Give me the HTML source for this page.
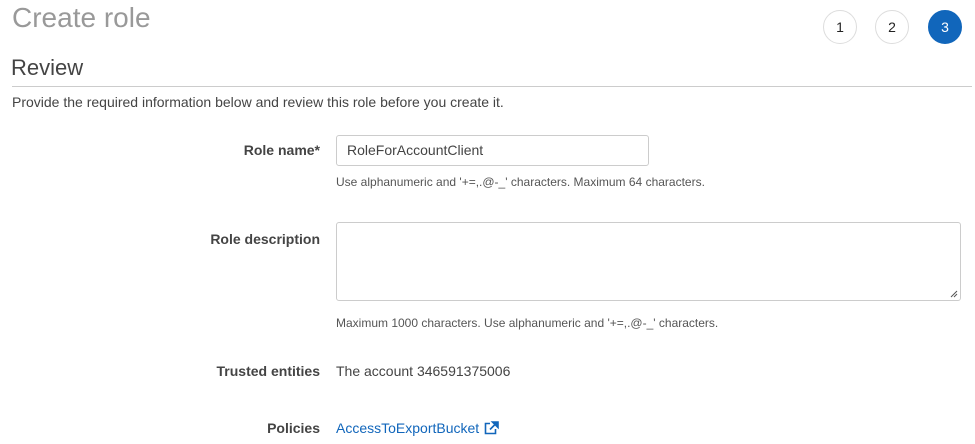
<!DOCTYPE html>
<html><head><style>
body{margin:0;width:975px;height:444px;background:#fff;font-family:"Liberation Sans",Arial,sans-serif;color:#444;position:relative;overflow:hidden}
.a{position:absolute;white-space:nowrap}
.c{position:absolute;width:32px;height:32px;border-radius:50%;border:1px solid #ddd;text-align:center;line-height:32px;font-size:14px;color:#222;top:10px}
.lbl{position:absolute;right:655px;font-weight:bold;font-size:14px;color:#444;white-space:nowrap}
.help{position:absolute;left:336px;font-size:12px;color:#555;white-space:nowrap}
</style></head><body>
<div class="a" style="left:12px;top:2px;font-size:28px;color:#999">Create role</div>
<div class="c" style="left:823px">1</div>
<div class="c" style="left:875px">2</div>
<div class="c" style="left:928px;background:#1166bb;border-color:#1166bb;color:#fff">3</div>
<div class="a" style="left:11px;top:55px;font-size:22px;color:#444">Review</div>
<div class="a" style="left:12px;top:86px;width:960px;height:1px;background:#ccc"></div>
<div class="a" style="left:12px;top:94px;font-size:14px">Provide the required information below and review this role before you create it.</div>

<div class="lbl" style="top:142px">Role name*</div>
<div class="a" style="left:336px;top:135px;width:311px;height:29px;border:1px solid #ccc;border-radius:3px"></div>
<div class="a" style="left:347px;top:142px;font-size:14px;color:#444">RoleForAccountClient</div>
<div class="help" style="top:175px">Use alphanumeric and '+=,.@-_' characters. Maximum 64 characters.</div>

<div class="lbl" style="top:231px">Role description</div>
<div class="a" style="left:336px;top:222px;width:623px;height:77px;border:1px solid #ccc;border-radius:3px"></div>
<svg class="a" style="left:950px;top:290px" width="8" height="8"><path d="M1 7L7 1M4 7L7 4" stroke="#555" stroke-width="1"/></svg>
<div class="help" style="top:316px">Maximum 1000 characters. Use alphanumeric and '+=,.@-_' characters.</div>

<div class="lbl" style="top:363px">Trusted entities</div>
<div class="a" style="left:336px;top:363px;font-size:14px">The account 346591375006</div>

<div class="lbl" style="top:420px">Policies</div>
<div class="a" style="left:336px;top:420px;font-size:14px;color:#1166bb">AccessToExportBucket</div>
<svg class="a" style="left:484px;top:421px" width="15" height="14" viewBox="0 0 15 14"><path d="M6 2.5H1.5V12.5H11.5V8" fill="none" stroke="#1166bb" stroke-width="1.6"/><path d="M6 8.5L13 1.5M8.5 1H14V6.5Z" fill="#1166bb" stroke="#1166bb" stroke-width="1.6"/></svg>
</body></html>
